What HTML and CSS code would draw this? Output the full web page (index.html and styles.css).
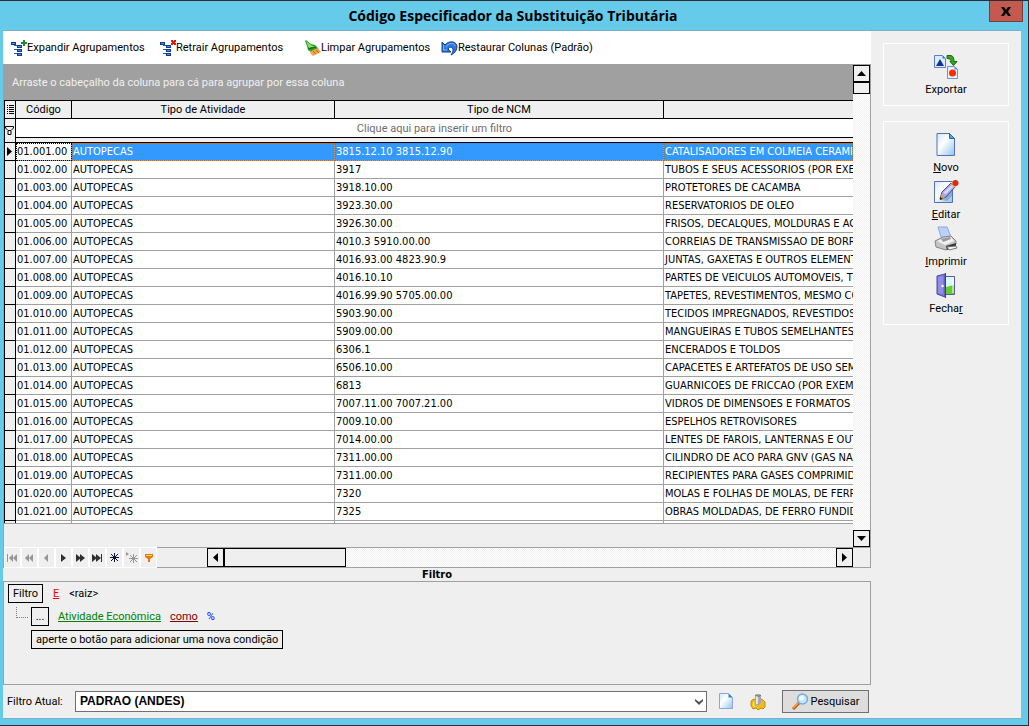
FILE: index.html
```html
<!DOCTYPE html>
<html lang="pt-BR">
<head>
<meta charset="utf-8">
<title>Código Especificador da Substituição Tributária</title>
<link rel="stylesheet" href="styles.css">
</head>
<body>
<div class="window">
  <header class="titlebar">
    <h1 class="title">Código Especificador da Substituição Tributária</h1>
    <button class="close" type="button" aria-label="Fechar janela">
      <svg width="10" height="9" viewBox="0 0 10 9"><path d="M0 0h3l2 3 2-3h3L7 4.500l3 4.500H7L5 6 3 9H0l3-4.500z" fill="#000"/></svg>
    </button>
  </header>
  <div class="client">
    <main class="main">
      <div class="toolbar">
        <button class="tool" type="button">
          <svg width="16" height="18" viewBox="0 0 16 18" shape-rendering="crispEdges"><path d="M2 5h1v10h3v-1H3v-3h3v-1H3V7h3V6H3V5z" fill="#2a62a8"/><g fill="#12398c"><path d="M0 3h5v3H0zM6 6h5v3H6zM6 10h5v3H6zM6 14h5v3H6z"/></g><g fill="#4f8fe0"><path d="M1 4h3v1H1zM7 7h3v1H7zM7 11h3v1H7zM7 15h3v1H7z"/></g><path d="M12 1h2v2h2v2h-2v2h-2V5h-2V3h2z" fill="#1f8a2b"/></svg>
          <span>Expandir Agrupamentos</span>
        </button>
        <button class="tool" type="button">
          <svg width="16" height="18" viewBox="0 0 16 18" shape-rendering="crispEdges"><path d="M2 5h1v10h3v-1H3v-3h3v-1H3V7h3V6H3V5z" fill="#2a62a8"/><g fill="#12398c"><path d="M0 3h5v3H0zM6 6h5v3H6zM6 10h5v3H6zM6 14h5v3H6z"/></g><g fill="#4f8fe0"><path d="M1 4h3v1H1zM7 7h3v1H7zM7 11h3v1H7zM7 15h3v1H7z"/></g><path d="M11 1h2v1h1V1h2v2h-1v1h1v2h-2V5h-1v1h-2V4h1V3h-1z" fill="#e01408"/></svg>
          <span>Retrair Agrupamentos</span>
        </button>
        <button class="tool" type="button">
          <svg width="16" height="18" viewBox="0 0 16 18"><path d="M0 2l1-1 5 4 4 1 3 3v2l-7 2-3-2-1-4z" fill="#2c9a2a"/><path d="M1 2l5 4 4 2-4 0-2 1z" fill="#8fe060"/><path d="M3 10l8-2" stroke="#0d6818"/><path d="M5 13l3-2 5-2 3 4-2 1-2 1-4 2-2-2z" fill="#f0a548"/><path d="M8 12l3 3M11 11l3 3" stroke="#b86d1d"/></svg>
          <span>Limpar Agrupamentos</span>
        </button>
        <button class="tool" type="button">
          <svg width="17" height="18" viewBox="0 0 17 18"><path d="M1 3v10h9L7 10c2-3 5-2 5 1 0 2-1 3-2 5 4-2 6-5 6-8 0-6-8-7-12-2z" fill="#2f78d8" stroke="#123c98"/><path d="M2.500 6v5H6M5 8c2-4 8-5 9-1" stroke="#7bb8f5" fill="none"/></svg>
          <span>Restaurar Colunas (Padrão)</span>
        </button>
      </div>

      <section class="grid">
        <div class="view">
          <div class="group-panel">Arraste o cabeçalho da coluna para cá para agrupar por essa coluna</div>
          <table class="table">
            <colgroup><col class="c-mark"><col class="c-code"><col class="c-type"><col class="c-ncm"><col></colgroup>
            <thead>
              <tr class="head">
                <th class="mark" aria-label="Colunas"><svg width="7" height="9" viewBox="0 0 7 9" shape-rendering="crispEdges"><path d="M0 0h1v1H0zM2 0h5v1H2zM0 2h1v1H0zM2 2h5v1H2zM0 4h1v1H0zM2 4h5v1H2zM0 6h1v1H0zM2 6h5v1H2zM0 8h1v1H0zM2 8h5v1H2z"/></svg></th>
                <th>Código</th><th>Tipo de Atividade</th><th>Tipo de NCM</th><th class="last" aria-label="Descrição"></th>
              </tr>
              <tr class="filter-row">
                <td class="mark" rowspan="2"><svg width="9" height="9" viewBox="0 0 9 9" fill="none" stroke="#000"><path d="M.5 1v-.5h8V2L6 4.500H3L.5 2zM3 5v3.500h3V5"/></svg></td>
                <td class="hint" colspan="4">Clique aqui para inserir um filtro</td>
              </tr>
              <tr class="gap-row"><td colspan="4"></td></tr>
            </thead>
            <tbody>
              <tr class="selected"><td class="mark"><svg width="5" height="9" viewBox="0 0 5 9"><path d="M0 0l5 4.500L0 9z"/></svg></td><td>01.001.00</td><td>AUTOPECAS</td><td>3815.12.10 3815.12.90</td><td>CATALISADORES EM COLMEIA CERAMI</td></tr>
              <tr><td class="mark"></td><td>01.002.00</td><td>AUTOPECAS</td><td>3917</td><td>TUBOS E SEUS ACESSORIOS (POR EXE</td></tr>
              <tr><td class="mark"></td><td>01.003.00</td><td>AUTOPECAS</td><td>3918.10.00</td><td>PROTETORES DE CACAMBA</td></tr>
              <tr><td class="mark"></td><td>01.004.00</td><td>AUTOPECAS</td><td>3923.30.00</td><td>RESERVATORIOS DE OLEO</td></tr>
              <tr><td class="mark"></td><td>01.005.00</td><td>AUTOPECAS</td><td>3926.30.00</td><td>FRISOS, DECALQUES, MOLDURAS E AC</td></tr>
              <tr><td class="mark"></td><td>01.006.00</td><td>AUTOPECAS</td><td>4010.3 5910.00.00</td><td>CORREIAS DE TRANSMISSAO DE BORR</td></tr>
              <tr><td class="mark"></td><td>01.007.00</td><td>AUTOPECAS</td><td>4016.93.00 4823.90.9</td><td>JUNTAS, GAXETAS E OUTROS ELEMENT</td></tr>
              <tr><td class="mark"></td><td>01.008.00</td><td>AUTOPECAS</td><td>4016.10.10</td><td>PARTES DE VEICULOS AUTOMOVEIS, T</td></tr>
              <tr><td class="mark"></td><td>01.009.00</td><td>AUTOPECAS</td><td>4016.99.90 5705.00.00</td><td>TAPETES, REVESTIMENTOS, MESMO CO</td></tr>
              <tr><td class="mark"></td><td>01.010.00</td><td>AUTOPECAS</td><td>5903.90.00</td><td>TECIDOS IMPREGNADOS, REVESTIDOS</td></tr>
              <tr><td class="mark"></td><td>01.011.00</td><td>AUTOPECAS</td><td>5909.00.00</td><td>MANGUEIRAS E TUBOS SEMELHANTES,</td></tr>
              <tr><td class="mark"></td><td>01.012.00</td><td>AUTOPECAS</td><td>6306.1</td><td>ENCERADOS E TOLDOS</td></tr>
              <tr><td class="mark"></td><td>01.013.00</td><td>AUTOPECAS</td><td>6506.10.00</td><td>CAPACETES E ARTEFATOS DE USO SEM</td></tr>
              <tr><td class="mark"></td><td>01.014.00</td><td>AUTOPECAS</td><td>6813</td><td>GUARNICOES DE FRICCAO (POR EXEM</td></tr>
              <tr><td class="mark"></td><td>01.015.00</td><td>AUTOPECAS</td><td>7007.11.00 7007.21.00</td><td>VIDROS DE DIMENSOES E FORMATOS C</td></tr>
              <tr><td class="mark"></td><td>01.016.00</td><td>AUTOPECAS</td><td>7009.10.00</td><td>ESPELHOS RETROVISORES</td></tr>
              <tr><td class="mark"></td><td>01.017.00</td><td>AUTOPECAS</td><td>7014.00.00</td><td>LENTES DE FAROIS, LANTERNAS E OUT</td></tr>
              <tr><td class="mark"></td><td>01.018.00</td><td>AUTOPECAS</td><td>7311.00.00</td><td>CILINDRO DE ACO PARA GNV (GAS NA</td></tr>
              <tr><td class="mark"></td><td>01.019.00</td><td>AUTOPECAS</td><td>7311.00.00</td><td>RECIPIENTES PARA GASES COMPRIMID</td></tr>
              <tr><td class="mark"></td><td>01.020.00</td><td>AUTOPECAS</td><td>7320</td><td>MOLAS E FOLHAS DE MOLAS, DE FERR</td></tr>
              <tr><td class="mark"></td><td>01.021.00</td><td>AUTOPECAS</td><td>7325</td><td>OBRAS MOLDADAS, DE FERRO FUNDID</td></tr>
              <tr class="stub"><td class="mark"></td><td></td><td></td><td></td><td></td></tr>
            </tbody>
          </table>
        </div>
        <div class="vscroll">
          <button class="sb" type="button" aria-label="Rolar para cima"><svg width="9" height="5" viewBox="0 0 9 5"><path d="M0 5l4.500-5L9 5z"/></svg></button>
          <div class="vthumb"></div>
          <div class="track"></div>
          <button class="sb" type="button" aria-label="Rolar para baixo"><svg width="9" height="5" viewBox="0 0 9 5"><path d="M0 0h9L4.500 5z"/></svg></button>
        </div>
        <div class="navrow">
          <div class="navigator">
            <button class="nav off" type="button" aria-label="Primeiro"><svg width="11" height="8" viewBox="0 0 11 8"><path d="M0 0h1v8H0zM6 0v8L2 4zM10 0v8L6 4z"/></svg></button>
            <button class="nav off" type="button" aria-label="Página anterior"><svg width="9" height="8" viewBox="0 0 9 8"><path d="M4 0v8L0 4zM8 0v8L4 4z"/></svg></button>
            <button class="nav off" type="button" aria-label="Anterior"><svg width="5" height="8" viewBox="0 0 5 8"><path d="M4 0v8L0 4z"/></svg></button>
            <button class="nav" type="button" aria-label="Próximo"><svg width="5" height="8" viewBox="0 0 5 8"><path d="M0 0l5 4-5 4z"/></svg></button>
            <button class="nav" type="button" aria-label="Próxima página"><svg width="9" height="8" viewBox="0 0 9 8"><path d="M0 0l5 4-5 4zM4 0l5 4-5 4z"/></svg></button>
            <button class="nav" type="button" aria-label="Último"><svg width="11" height="8" viewBox="0 0 11 8"><path d="M0 0l5 4-5 4zM4 0l5 4-5 4zM9 0h1v8H9z"/></svg></button>
            <button class="nav" type="button" aria-label="Inserir"><svg width="9" height="9" viewBox="0 0 9 9"><path d="M4.500 0v9M0 4.500h9M1 1l7 7M8 1L1 8" stroke="#101030"/></svg></button>
            <button class="nav off" type="button" aria-label="Anexar"><svg width="12" height="11" viewBox="0 0 12 11"><path d="M0 0l3 2-3 2z"/><path d="M7.500 2v9M3 6.500h9M4 3l7 7M11 3l-7 7" stroke="#969696"/></svg></button>
            <button class="nav" type="button" aria-label="Filtrar"><svg width="8" height="8" viewBox="0 0 8 8"><path d="M0 0h8v3L5 5v3H3V5L0 3z" fill="#e87800"/><path d="M1 1h6v1H1z" fill="#ffd070"/></svg></button>
          </div>
          <div class="hscroll">
            <button class="sb" type="button" aria-label="Rolar para a esquerda"><svg width="5" height="9" viewBox="0 0 5 9"><path d="M5 0v9L0 4.500z"/></svg></button>
            <div class="hthumb"></div>
            <div class="track"></div>
            <button class="sb" type="button" aria-label="Rolar para a direita"><svg width="5" height="9" viewBox="0 0 5 9"><path d="M0 0l5 4.500L0 9z"/></svg></button>
          </div>
        </div>
      </section>

      <h2 class="caption">Filtro</h2>
      <section class="filter">
        <div class="line">
          <button class="box" type="button">Filtro</button>
          <a class="op" href="#">E</a>
          <span>&lt;raiz&gt;</span>
        </div>
        <div class="line child">
          <span class="branch"></span>
          <button class="box dots" type="button">...</button>
          <a class="field" href="#">Atividade Econômica</a>
          <a class="cond" href="#">como</a>
          <span class="value">%</span>
        </div>
        <button class="box add" type="button">aperte o botão para adicionar uma nova condição</button>
      </section>

      <div class="current">
        <label class="current-label" for="current-filter">Filtro Atual:</label>
        <div class="combo">
          <select id="current-filter"><option>PADRAO (ANDES)</option></select>
          <svg class="chevron" width="8" height="6" viewBox="0 0 8 6"><path d="M0 0l4 3 4-3v2L4 6 0 2z" fill="#505050"/></svg>
        </div>
        <button class="icon-button" type="button" aria-label="Novo filtro"><svg width="14" height="17" viewBox="0 0 14 17"><defs><linearGradient id="page" x2="1" y2="1"><stop stop-color="#cfe6f8"/><stop offset=".4" stop-color="#fff"/><stop offset="1" stop-color="#8ec4ee"/></linearGradient></defs><path d="M.5.5h9l4 4v11H.5z" fill="url(#page)" stroke="#8ea4dc"/><path d="M9.500.5v4h4z" fill="#2d7fc0"/></svg></button>
        <button class="icon-button" type="button" aria-label="Configurar filtro"><svg width="16" height="18" viewBox="0 0 16 18"><path d="M1 9l1-2 3-1h6l2 1 2 2v5l-2 2-2-1-3 2-2-2-3 1-1-2-1-1z" fill="#f0bd20" stroke="#bd8a10"/><path d="M4 9l-1 3 2 2" stroke="#fff08a" fill="none"/><path d="M5 2l2-1h3l1 1v8l-2 2H6l-1-2z" fill="#aaa5a8"/><path d="M6 3h2v8H6z" fill="#e4e4ea"/><path d="M5 2l2 1h3l1-1" stroke="#777" fill="none"/></svg></button>
        <button class="search" type="button">
          <svg width="17" height="17" viewBox="0 0 17 17"><path d="M1 16l6-6" stroke="#a35a18" stroke-width="3"/><path d="M1 15l5-5" stroke="#ff9a3c" stroke-width="2"/><circle cx="10.500" cy="6" r="5" fill="#bfeafb" stroke="#7fa8d6" stroke-width="1.500"/><circle cx="9.500" cy="5" r="2.500" fill="#f0fcff"/></svg>
          <span>Pesquisar</span>
        </button>
      </div>
    </main>

    <aside class="side">
      <div class="group">
        <button class="action" type="button">
          <svg width="26" height="25" viewBox="0 0 26 25"><path d="M1.500 1.500h8l3 3v9h-11z" fill="#dceefc" stroke="#5d80c0"/><path d="M9.500 1.500v3h3z" fill="#3d78c0"/><path d="M7 5l4 7H3z" fill="#14309a"/><path d="M14 1.500h3c3 0 4 2 4 6h3l-3.500 4-3.500-4h1c0-2-1-3-4-3z" fill="#2fa820" stroke="#17660c"/><path d="M14.500 12.500h7l3 3v9h-10z" fill="#e6f2fc" stroke="#7090c8"/><path d="M21.500 12.500v3h3z" fill="#4d88cc"/><circle cx="19.500" cy="19" r="3.500" fill="#ff2a00"/></svg>
          <span>Exportar</span>
        </button>
      </div>
      <div class="group">
        <button class="action" type="button">
          <svg width="20" height="25" viewBox="0 0 20 25"><path d="M1 1.500h12.500l5 5v17H1z" fill="url(#page)" stroke="#5570b4"/><path d="M13.500 1.500v5h5z" fill="#58a4e0" stroke="#3460a8"/></svg>
          <span><u>N</u>ovo</span>
        </button>
        <button class="action" type="button">
          <svg width="26" height="25" viewBox="0 0 26 25"><path d="M1.500 2.500h18v21h-18z" fill="url(#page)" stroke="#5570b4"/><path d="M9 21l10-12v8l-5 5z" fill="#4f7eb4" opacity=".5"/><path d="M7 20l2-7L18 4l4 4-9 10z" fill="#a9a9e6" stroke="#4c4c86"/><path d="M10 14l9-8 2 1-8 8z" fill="#d8d8fa"/><path d="M7 21l1-6 4 4z" fill="#d89b42"/><path d="M7 21v-3l3 2z" fill="#222"/><path d="M18 4l2-2 4 4-2 3z" fill="#f5bd18"/><circle cx="22.500" cy="4" r="3" fill="#e02818"/></svg>
          <span><u>E</u>ditar</span>
        </button>
        <button class="action" type="button">
          <svg width="24" height="25" viewBox="0 0 24 25"><path d="M4 1h9l4 10-9 3z" fill="#bcd0fc" stroke="#8ba4ee"/><path d="M1 15l8-4 8-1 5 5v3l-10 6-10-3z" fill="#c4c4c4" stroke="#858585"/><path d="M3 15l7-3 7-1 3 4-9 4z" fill="#f1f1f1"/><path d="M7 13l9-2 1 2-8 3z" fill="#999"/><path d="M12 20l10-3v3l-9 4z" fill="#333"/><path d="M13 21l9-1 1 2-8 2z" fill="#f4f4f4" stroke="#777"/></svg>
          <span><u>I</u>mprimir</span>
        </button>
        <button class="action" type="button">
          <svg width="20" height="25" viewBox="0 0 20 25"><path d="M9 3.500h9.500v18H9z" fill="#d5fbff" stroke="#5a5a9c"/><path d="M10 14l4-1 4-1v9h-8z" fill="#64ce28"/><path d="M17 5v15" stroke="#fff"/><path d="M1 3l8-2v23l-8-3z" fill="#7c78d8" stroke="#4a48a4"/><path d="M2 4l5-1v18l-5-1z" fill="#a09cf0" opacity=".6"/><path d="M9.500 0v25" stroke="#3e3c88"/><circle cx="6.500" cy="13" r="1.200" fill="#fff"/></svg>
          <span>Fecha<u>r</u></span>
        </button>
      </div>
    </aside>
  </div>
</div>
</body>
</html>
```
FILE: styles.css
```css
* { box-sizing: border-box; }

body {
  margin: 0;
  color: #000;
  font: 11px/14px Roboto, sans-serif;
}

button, select { font: inherit; color: inherit; }

button {
  display: flex;
  align-items: center;
  justify-content: center;
  margin: 0;
  padding: 0;
  border: 0;
  background: none;
}

svg { display: block; flex: none; }

/* Window frame */
.window {
  display: flex;
  flex-direction: column;
  min-height: 100vh;
  padding: 0 7px 6px 3px;
  border: solid #2b2f33;
  border-width: 1px 1px 1px 0;
  background: #66caea;
}

.titlebar {
  display: flex;
  align-items: flex-start;
  height: 29px;
  padding-left: 34px;
}

.title {
  flex: 1;
  margin: 0;
  font: bold 14px/30px "Open Sans", sans-serif;
  text-align: center;
}

.close {
  width: 34px;
  height: 21px;
  margin-right: -2px;
  border: 1px solid #7c3a38;
  border-top: 0;
  background: #c4594f;
}

.client {
  flex: 1;
  display: flex;
  border: solid #7eafc8;
  border-width: 1px 0;
  background: #efefef;
}

.main {
  flex: 1;
  min-width: 0;
  display: flex;
  flex-direction: column;
}

/* Toolbar */
.toolbar {
  display: grid;
  grid-template-columns: 149px 145px 136px auto;
  align-items: center;
  height: 33px;
  padding-left: 8px;
  background: #fff;
}

.tool {
  justify-content: flex-start;
  white-space: nowrap;
}

/* Data grid */
.grid {
  flex: 1;
  display: grid;
  grid-template-columns: minmax(0, 1fr) 17px;
  grid-template-rows: 1fr auto;
  border: solid #a0a0a0;
  border-width: 0 1px 1px;
}

.view { overflow: hidden; }

.group-panel {
  height: 36px;
  padding-left: 8px;
  line-height: 38px;
  color: #f0f0f0;
  background: #a0a0a0;
}

.table {
  width: 100%;
  table-layout: fixed;
  border-spacing: 0;
  border-bottom: 1px solid #a0a0a0;
  background: #fff;
}

.c-mark { width: 12px; }
.c-code { width: 56px; }
.c-type { width: 263px; }
.c-ncm { width: 329px; }

.table th, .table td {
  height: 18px;
  padding: 0 1px;
  overflow: hidden;
  line-height: 17px;
  white-space: nowrap;
  border: solid #a0a0a0;
  border-width: 0 1px 1px 0;
}

.table tbody td {
  font-family: "DejaVu Sans Condensed", "DejaVu Sans", sans-serif;
}

.table th {
  height: 19px;
  font-weight: normal;
  border-color: #000;
  border-top-width: 1px;
  background: #efefef;
}

.table th.last, .table td:last-child { border-right: 0; }

.table .mark {
  padding-left: 2px;
  border-color: #000;
  border-left-width: 1px;
  background: #efefef;
}

.table .filter-row .mark {
  padding-left: 0;
  border-right-width: 1px;
}

.table .filter-row .hint {
  height: 19px;
  color: #6d6d6d;
  text-align: center;
  border-bottom-color: #000;
}

.table .gap-row td {
  height: 5px;
  line-height: 4px;
  border-bottom-color: #000;
  background: #efefef;
}

.selected td {
  color: #fff;
  background: #3399ff;
}

.table .selected td:nth-child(n+2) {
  outline: 1px dotted #b86a20;
  outline-offset: -1px;
}

.table .selected td:nth-child(2) {
  color: #000;
  background: #fff;
  outline-color: #000;
}

.table .stub td {
  height: 2px;
  line-height: 2px;
  border-bottom: 0;
}

/* Scroll bars */
.sb, .vthumb, .hthumb {
  border: 1px solid #000;
  background: #efefef;
}

.track {
  flex: 1;
  background: conic-gradient(#fff 25%, #f0f0f0 0 50%, #fff 0 75%, #f0f0f0 0) 0 0 / 2px 2px;
}

.vscroll {
  display: flex;
  flex-direction: column;
  border-top: 1px solid #a0a0a0;
}

.vscroll .sb { height: 17px; }
.vthumb { height: 12px; }

.navrow {
  grid-column: 1 / -1;
  display: flex;
  height: 20px;
  padding-right: 17px;
  border-top: 1px solid #a0a0a0;
}

.navigator {
  display: flex;
  gap: 2px;
  width: 203px;
  padding-left: 1px;
}

.nav {
  width: 15px;
  box-shadow: 0 0 0 1px #fff;
  fill: #303030;
}

.nav.off { fill: #969696; }

.hscroll {
  flex: 1;
  display: flex;
}

.hscroll .sb { width: 17px; }
.hthumb { width: 122px; }

/* Filter builder */
.caption {
  margin: 0;
  font: bold 11px/13px "DejaVu Sans Condensed", "DejaVu Sans", sans-serif;
  text-align: center;
}

.filter {
  height: 104px;
  padding: 2px 4px;
  border: 1px solid #a0a0a0;
}

.line {
  display: flex;
  align-items: center;
  gap: 10px;
  height: 19px;
}

.box {
  height: 19px;
  padding: 0 4px;
  border: 1px solid #000;
}

.child {
  gap: 9px;
  margin: 4px 0;
}

.branch {
  align-self: flex-start;
  width: 12px;
  height: 11px;
  margin: 0 -6px 0 8px;
  border: dotted #808080;
  border-width: 0 0 1px 1px;
}

.dots { width: 18px; }
.add { margin-left: 23px; }
.op { color: #f00; }
.field { color: #008000; }
.cond { color: #800000; }
.value { color: #00f; }

/* Current filter */
.current {
  display: flex;
  align-items: center;
  height: 33px;
  padding: 0 2px 0 4px;
}

.current-label { width: 68px; }

.combo {
  position: relative;
  flex: 1;
  margin-right: 11px;
}

.combo select {
  display: block;
  width: 100%;
  height: 21px;
  padding: 0 4px;
  font: bold 12px/19px "Liberation Sans", sans-serif;
  border: 1px solid #707070;
  border-radius: 0;
  appearance: none;
  background: #fff;
}

.chevron {
  position: absolute;
  right: 4px;
  top: 8px;
  pointer-events: none;
}

.icon-button {
  width: 16px;
  height: 20px;
  margin-right: 16px;
}

.search {
  gap: 2px;
  width: 87px;
  height: 23px;
  border: 1px solid #707070;
  background: #ddd;
}

/* Action panel */
.side {
  width: 150px;
  padding: 12px 12px 0;
}

.group {
  display: flex;
  flex-direction: column;
  gap: 4px;
  padding: 10px 0 8px;
  border: 1px solid #fff;
}

.group + .group { margin-top: 15px; }

.action {
  flex-direction: column;
  gap: 4px;
}
```
